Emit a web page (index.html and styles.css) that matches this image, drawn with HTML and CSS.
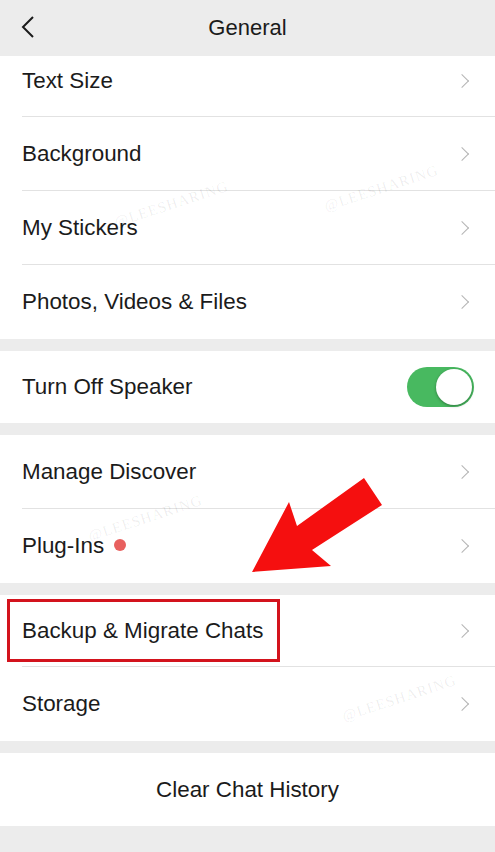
FILE: index.html
```html
<!DOCTYPE html>
<html lang="en">
<head>
    <meta charset="UTF-8">
    <title>General</title>
    <link rel="stylesheet" href="styles.css">
</head>
<body>
<div class="screen">
    <div class="topbar">
        <svg class="back" width="14" height="24" viewBox="0 0 14 24"><path d="M12 2 L2 12 L12 22" fill="none" stroke="#1b1b1b" stroke-width="2"/></svg>
        <h1>General</h1>
    </div>

    <div class="group">
        <div class="row first"><span class="label">Text Size</span><span class="chev"></span></div>
        <div class="row"><span class="label">Background</span><span class="chev"></span></div>
        <div class="row"><span class="label">My Stickers</span><span class="chev"></span></div>
        <div class="row"><span class="label">Photos, Videos &amp; Files</span><span class="chev"></span></div>
    </div>

    <div class="group">
        <div class="row short"><span class="label">Turn Off Speaker</span><span class="toggle"><span class="knob"></span></span></div>
    </div>

    <div class="group">
        <div class="row"><span class="label">Manage Discover</span><span class="chev"></span></div>
        <div class="row"><span class="label">Plug-Ins <span class="dot"></span></span><span class="chev"></span></div>
    </div>

    <div class="group">
        <div class="row short"><span class="label mark">Backup &amp; Migrate Chats</span><span class="chev"></span></div>
        <div class="row"><span class="label">Storage</span><span class="chev"></span></div>
    </div>

    <div class="group">
        <div class="row center"><span class="label">Clear Chat History</span></div>
    </div>

    <span class="wm" style="left:112px;top:196px">@LEESHARING</span>
    <span class="wm" style="left:322px;top:180px">@LEESHARING</span>
    <span class="wm" style="left:86px;top:510px">@LEESHARING</span>
    <span class="wm" style="left:340px;top:690px">@LEESHARING</span>

    <svg class="arrow" width="495" height="852" viewBox="0 0 495 852">
        <polygon points="364,478 382,505 312,550 331,566 252,572 289,502 297,526" fill="#f50f0f"/>
    </svg>
</div>
</body>
</html>
```

FILE: styles.css
```css
html, body {
    margin: 0;
    background-color: #ececec;
    font-family: "Liberation Sans", Arial, sans-serif;
    color: #1b1b1b;
}
.screen {
    position: relative;
    width: 495px;
    min-height: 852px;
    overflow: hidden;
}
.topbar {
    height: 56px;
    display: flex;
    align-items: center;
    justify-content: center;
    position: relative;
    background-color: #ececec;
}
.topbar h1 {
    margin: 0;
    font-size: 22px;
    font-weight: normal;
}
.back {
    position: absolute;
    left: 21px;
    top: 15px;
}
.group {
    background-color: white;
    margin-bottom: 12px;
    padding-left: 22px;
}
.row {
    height: 74px;
    box-sizing: border-box;
    display: flex;
    align-items: center;
    justify-content: space-between;
    padding-right: 22px;
    border-bottom: 1px solid #e2e2e2;
    font-size: 22.4px;
}
.row:last-child {
    border-bottom: none;
}
.row.first {
    height: 61px;
    padding-bottom: 11px;
}
.row.short {
    height: 72px;
}
.row.center {
    justify-content: center;
    margin-left: -22px;
    padding-right: 0;
    height: 73px;
}
.chev {
    width: 9px;
    height: 9px;
    border-top: 1.5px solid #b4b4b4;
    border-right: 1.5px solid #b4b4b4;
    transform: rotate(45deg);
    margin-right: 6px;
}
.dot {
    display: inline-block;
    width: 12px;
    height: 12px;
    border-radius: 50%;
    background-color: #e8605f;
    margin-left: 4px;
    vertical-align: 2px;
}
.toggle {
    width: 67px;
    height: 40px;
    border-radius: 20px;
    background-color: #48b960;
    display: flex;
    justify-content: flex-end;
    align-items: center;
    padding: 2px;
    box-sizing: border-box;
    margin-right: -1px;
}
.knob {
    width: 36px;
    height: 36px;
    border-radius: 50%;
    background-color: white;
    box-shadow: 0 1px 3px rgba(0, 0, 0, 0.35);
}
.mark {
    border: 3px solid #d3131d;
    margin-left: -15px;
    padding: 16px 14px 15px 12px;
}
.wm {
    position: absolute;
    font-family: "Liberation Serif", serif;
    font-size: 15px;
    letter-spacing: 1px;
    color: rgba(0, 0, 0, 0.07);
    transform: rotate(-18deg);
}
.arrow {
    position: absolute;
    left: 0;
    top: 0;
    pointer-events: none;
}
```
